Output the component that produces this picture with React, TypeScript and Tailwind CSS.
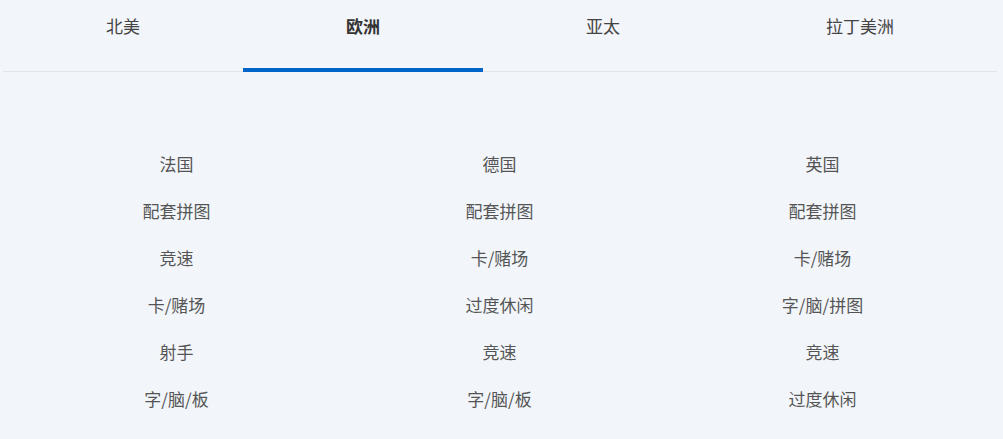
import React from "react";

const tabs = ["北美", "欧洲", "亚太", "拉丁美洲"];
const cols = [
  ["法国", "配套拼图", "竞速", "卡/赌场", "射手", "字/脑/板"],
  ["德国", "配套拼图", "卡/赌场", "过度休闲", "竞速", "字/脑/板"],
  ["英国", "配套拼图", "卡/赌场", "字/脑/拼图", "竞速", "过度休闲"],
];

export default function App() {
  return (
    <div
      className="w-[1003px] h-[439px] bg-[#f2f5fa] overflow-hidden"
      style={{ fontFamily: '"Noto Sans CJK SC", "Noto Sans", sans-serif' }}
    >
      <div className="ml-[3px] w-[994px] flex border-b border-[#e2e6ec]">
        {tabs.map((t, i) => (
          <div
            key={t}
            className={`${i === 3 ? "flex-1" : "w-[240px]"} relative h-[71px] flex justify-center pt-[13px] text-[17px] leading-[26px] ${
              i === 1 ? "font-bold text-[#333]" : "text-[#444]"
            }`}
          >
            {t}
            {i === 1 && (
              <div className="absolute left-0 right-0 bottom-[-1px] h-[4px] bg-[#0064c8]" />
            )}
          </div>
        ))}
      </div>
      <div className="ml-[15px] w-[969px] grid grid-cols-3 pt-[68px]">
        {cols.map((c, ci) => (
          <div key={ci} className="flex flex-col items-center">
            {c.map((s, si) => (
              <div key={si} className="h-[47px] flex items-center text-[17px] text-[#555]">
                {s}
              </div>
            ))}
          </div>
        ))}
      </div>
    </div>
  );
}
